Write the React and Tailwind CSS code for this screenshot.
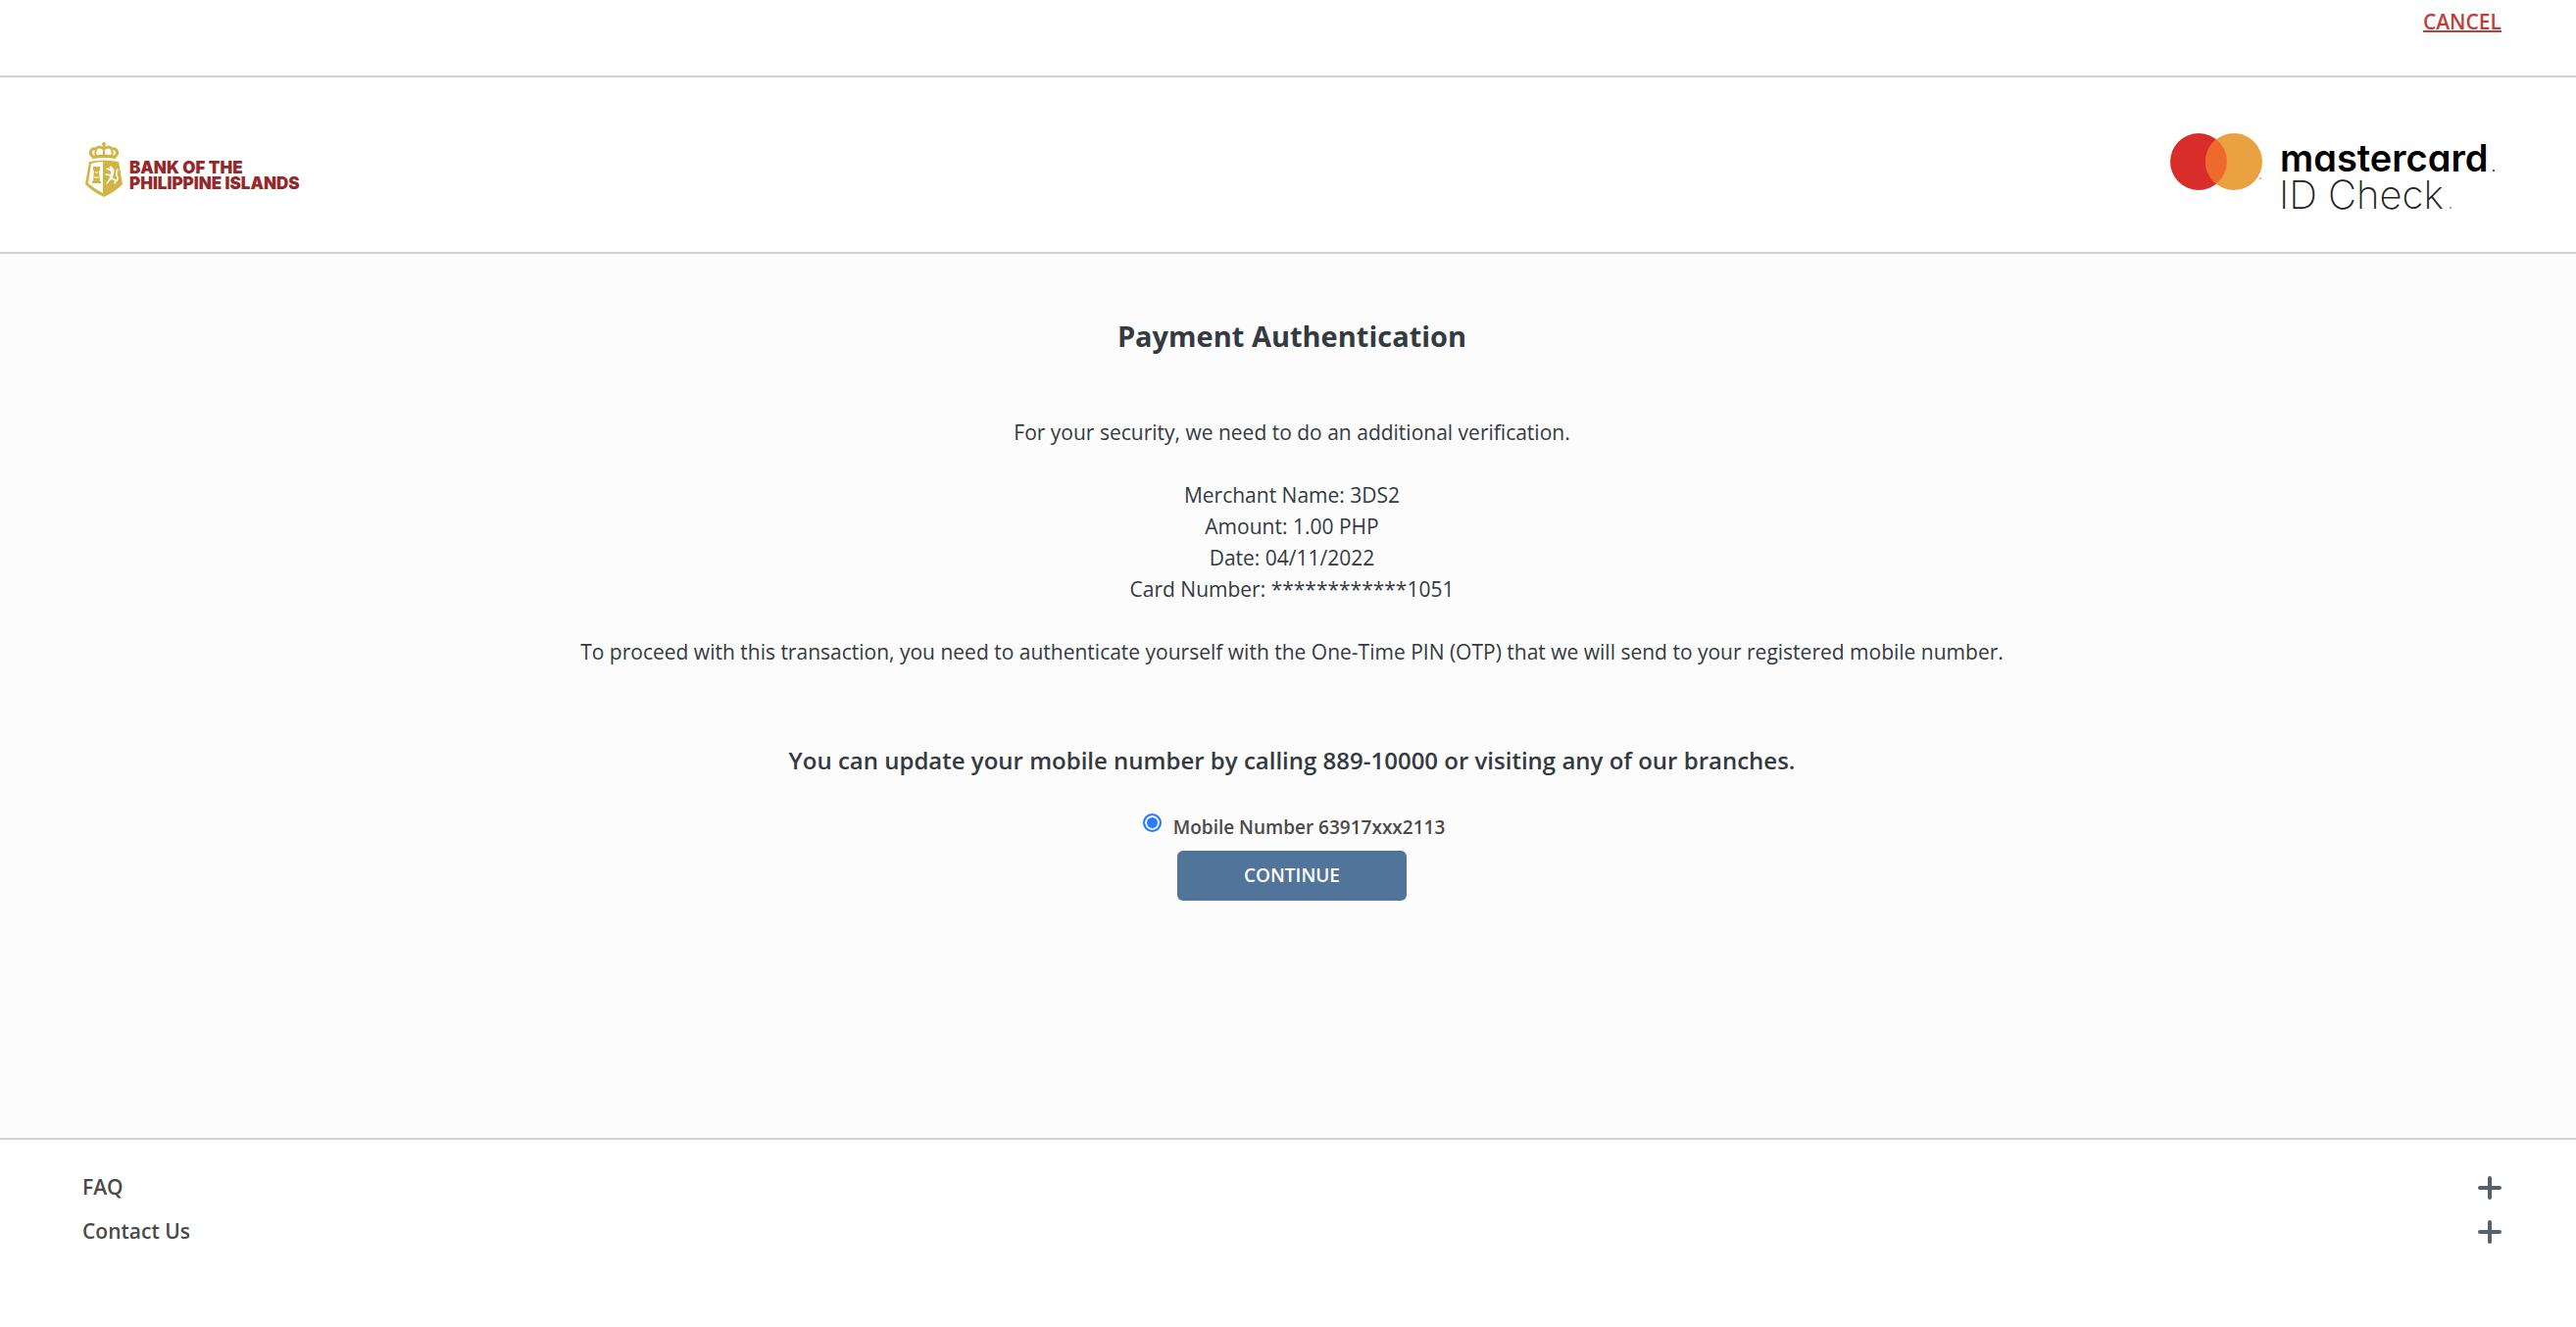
import React, { useState } from 'react';

const infoLines = [
  'Merchant Name: 3DS2',
  'Amount: 1.00 PHP',
  'Date: 04/11/2022',
  'Card Number: ************1051'
];

const footerItems = [{ name: 'FAQ' }, { name: 'Contact Us' }];

const BankLogo = () => (
  <svg viewBox="0 0 226 60" className="w-[226px] h-[60px]" role="img" aria-label="Bank of the Philippine Islands">
    {/* Crown */}
    <g fill="none" stroke="#d0b444" strokeWidth="3">
      <path d="M10 16C5 12 8 7 13 8C15 5 19 6 21 8C23 6 27 5 29 8C34 7 37 12 32 16" />
      <path d="M14 17C12 14 12 11 13 9M28 17C30 14 30 11 29 9M21 3V17" strokeWidth="2" />
    </g>
    <circle cx="21" cy="3" r="2" fill="#d0b444" />
    <path d="M9 15Q21 12 33 15V18Q21 16 9 18Z" fill="#d0b444" />
    {/* Shield */}
    <path d="M6 21Q21 18 36 21L40 44Q32 52 21 57Q10 52 2 44Z" fill="#d0b444" />
    <path d="M8 23Q14 21 20 21V53Q12 49 5 43Z" fill="#fff" />
    {/* Tower */}
    <path d="M10 26H17V30H16L17 41H18V43H9V41H10L11 30H10Z" fill="#d0b444" />
    <path d="M12 32H15M11 37H16" stroke="#fff" strokeWidth="1" />
    {/* Lion */}
    <g fill="none" stroke="#fff" strokeLinecap="round">
      <path d="M28 27L30 30L29 35L28 38" strokeWidth="3" />
      <path d="M30 31L24 28M29 35L23 34M28 38L24 43M29 38L33 40L32 43" strokeWidth="1.5" />
      <path d="M34 41Q36 38 34 35Q33 32 35 29" strokeWidth="1.5" />
    </g>
    <g fill="#94282b" fontFamily="Inter, sans-serif" fontWeight="900" fontSize="17">
      <text x="47" y="33">BANK OF THE</text>
      <text x="47" y="49">PHILIPPINE ISLANDS</text>
    </g>
  </svg>
);

const MastercardLogo = () => (
  <svg viewBox="0 0 340 100" className="w-[340px] h-[100px]" role="img" aria-label="Mastercard ID Check">
    <circle cx="31" cy="35" r="29" fill="#d92d2b" />
    <circle cx="67" cy="35" r="29" fill="#eaa240" />
    <path d="M49 12.3A29 29 0 0 1 49 57.7A29 29 0 0 1 49 12.3Z" fill="#ee6a2c" />
    <circle cx="94" cy="52" r="1" fill="#eaa240" />
    <g fontFamily="Inter, sans-serif" className="[font-feature-settings:'cv11']">
      <text x="114" y="45" fill="#000" fontSize="38" fontWeight="600">mastercard</text>
      <text x="113" y="83" fill="#222" fontSize="40" fontWeight="200">ID Check</text>
    </g>
    <circle cx="332" cy="44" r="1" fill="#222" />
    <circle cx="288" cy="82" r="1" fill="#888" />
  </svg>
);

const PlusIcon = () => (
  <svg viewBox="0 0 24 24" className="w-6 h-6" aria-hidden="true">
    <path d="M12 2V22M2 12H22" stroke="#586070" strokeWidth="4" strokeLinecap="round" />
  </svg>
);

const App = () => {
  const [selected, setSelected] = useState('mobile');

  return (
    <div className="min-h-screen bg-white font-['Open_Sans',sans-serif] text-[#343a41]">
      {/* Cancel bar */}
      <div className="flex justify-end h-[79px] pt-2 pr-[76px] border-b-2 border-[#d0d0d0]">
        <a href="#cancel" className="h-7 text-[21px] leading-7 font-semibold text-[#bd3f3c] underline decoration-2">
          CANCEL
        </a>
      </div>

      {/* Logos */}
      <header className="flex items-start justify-between pt-[51px] pb-[27px] pl-[85px] pr-[76px] border-b-2 border-[#d0d0d0]">
        <div className="pt-[14px]">
          <BankLogo />
        </div>
        <MastercardLogo />
      </header>

      {/* Authentication form */}
      <main className="flex flex-col items-center bg-[#fcfcfc] pt-16 pb-[242px] pl-[84px] pr-[76px] text-center border-b-2 border-[#d0d0d0]">
        <h1 className="text-[29px] leading-10 font-bold">Payment Authentication</h1>
        <div className="pt-[62px] text-[21px] leading-8">
          <p>For your security, we need to do an additional verification.</p>
          <div className="py-8">
            {infoLines.map((line) => (
              <p key={line}>{line}</p>
            ))}
          </div>
          <p>To proceed with this transaction, you need to authenticate yourself with the One-Time PIN (OTP) that we will send to your registered mobile number.</p>
        </div>
        <h2 className="pt-[79px] text-2xl leading-8 font-semibold">
          You can update your mobile number by calling 889-10000 or visiting any of our branches.
        </h2>
        <form className="flex flex-col items-center pt-9" onSubmit={(e) => e.preventDefault()}>
          <div className="flex items-start gap-3 pl-1">
            <input
              id="mobile"
              type="radio"
              name="channel"
              checked={selected === 'mobile'}
              onChange={() => setSelected('mobile')}
              className="appearance-none mt-[2px] w-[19px] h-[19px] rounded-full border-2 border-[#2b7cf7] bg-[#2b7cf7] shadow-[inset_0_0_0_2px_white]"
            />
            <label htmlFor="mobile" className="text-[19px] leading-8 font-semibold text-[#4a4a4a]">
              Mobile Number 63917xxx2113
            </label>
          </div>
          <button type="submit" className="mt-2 w-[234px] h-[51px] rounded-md bg-[#51749b] text-[19px] font-semibold text-white">
            CONTINUE
          </button>
        </form>
      </main>

      {/* Help links */}
      <footer className="pt-[26px] pl-[84px] pr-[76px]">
        {footerItems.map((item) => (
          <button
            key={item.name}
            type="button"
            className="flex items-center justify-between w-full h-[45px] text-[21px] font-semibold text-[#4a4a4a]"
          >
            {item.name}
            <PlusIcon />
          </button>
        ))}
      </footer>
    </div>
  );
};

export default App;
